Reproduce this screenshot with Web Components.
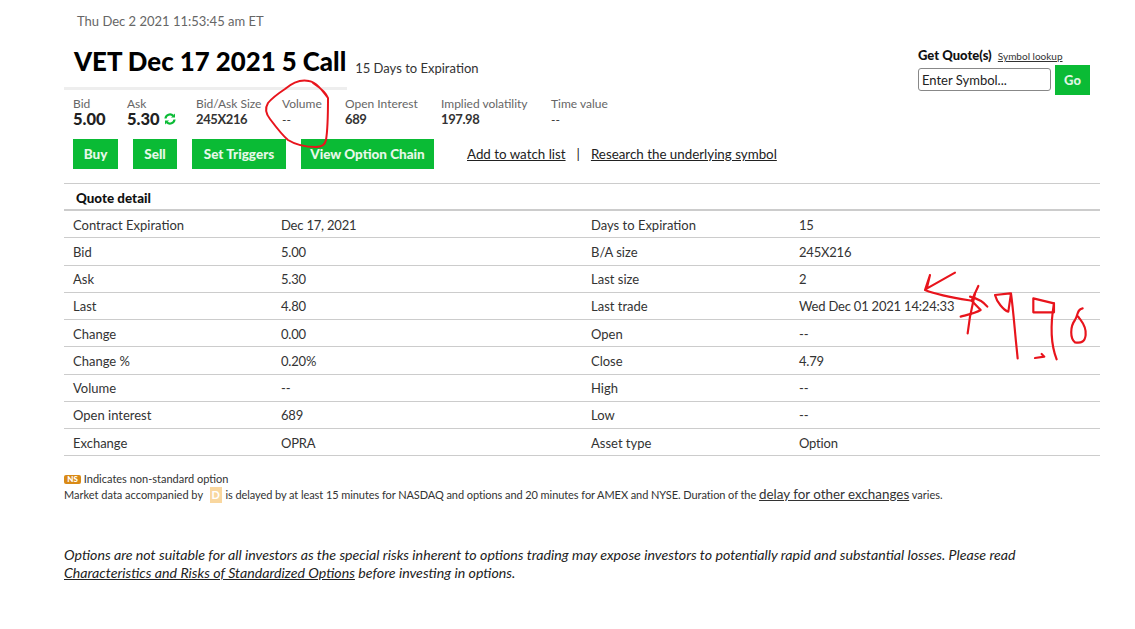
<!DOCTYPE html>
<html>
<head>
<meta charset="utf-8">
<title>VET Dec 17 2021 5 Call</title>
<style>
  html, body { margin: 0; background: #fff; }
  body { font-family: Lato, "Noto Sans", sans-serif; color: #333; }
  quote-actions a { text-decoration: underline; }
  quote-actions i { font-style: normal; margin: 0 11px; }
</style>
</head>
<body>
<quote-page>
  <quote-top></quote-top>
  <quote-stats>
    <stat-item label="Bid" value="5.00" big style="--w:54px"></stat-item>
    <stat-item label="Ask" value="5.30" big refresh style="--w:69px"></stat-item>
    <stat-item label="Bid/Ask Size" value="245X216" style="--w:86px"></stat-item>
    <stat-item label="Volume" value="--" plain style="--w:63px"></stat-item>
    <stat-item label="Open Interest" value="689" style="--w:96px"></stat-item>
    <stat-item label="Implied volatility" value="197.98" style="--w:110px"></stat-item>
    <stat-item label="Time value" value="--" plain style="--w:90px"></stat-item>
  </quote-stats>
  <quote-actions>
    <green-btn style="--w:45px">Buy</green-btn>
    <green-btn style="--w:44px">Sell</green-btn>
    <green-btn style="--w:94px">Set Triggers</green-btn>
    <green-btn style="--w:133px">View Option Chain</green-btn>
    <span slot="links"><a>Add to watch list</a><i>|</i><a>Research the underlying symbol</a></span>
  </quote-actions>
  <quote-table>
    <quote-row a="Contract Expiration" b="Dec 17, 2021" c="Days to Expiration" d="15"></quote-row>
    <quote-row a="Bid" b="5.00" c="B/A size" d="245X216"></quote-row>
    <quote-row a="Ask" b="5.30" c="Last size" d="2"></quote-row>
    <quote-row a="Last" b="4.80" c="Last trade" d="Wed Dec 01 2021 14:24:33"></quote-row>
    <quote-row a="Change" b="0.00" c="Open" d="--"></quote-row>
    <quote-row a="Change %" b="0.20%" c="Close" d="4.79"></quote-row>
    <quote-row a="Volume" b="--" c="High" d="--"></quote-row>
    <quote-row a="Open interest" b="689" c="Low" d="--"></quote-row>
    <quote-row a="Exchange" b="OPRA" c="Asset type" d="Option"></quote-row>
  </quote-table>
  <quote-notes></quote-notes>
  <red-ink></red-ink>
</quote-page>

<script>
class QuotePage extends HTMLElement {
  constructor() {
    super();
    this.attachShadow({ mode: "open" });
    this.shadowRoot.innerHTML = `
      <style>
        :host {
          display: block;
          position: relative;
          box-sizing: border-box;
          width: 1135px;
          height: 629px;
          padding: 14px 35px 0 64px;
          overflow: hidden;
        }
      </style>
      <slot></slot>
    `;
  }
}

class QuoteTop extends HTMLElement {
  constructor() {
    super();
    this.attachShadow({ mode: "open" });
    this.shadowRoot.innerHTML = `
      <style>
        :host { display: block; height: 75px; }
        .time { font-size: 13px; line-height: 15px; color: #666; padding-left: 13px; }
        .row { display: flex; justify-content: space-between; }
        .left { width: 283px; height: 45px; margin-top: 16px; padding-left: 10px; box-sizing: border-box; white-space: nowrap; border-bottom: 3px solid #eee; }
        h1 { display: inline; margin: 0; font-size: 25.8px; line-height: 32px; font-weight: 900; color: #000; }
        .days { font-size: 13px; color: #333; margin-left: 9px; position: relative; top: 2px; }
        .get { width: 172px; margin: 15px 10px 0 0; }
        .get b { font-size: 13px; font-weight: 900; color: #111; }
        .get a { font-size: 10px; color: #333; text-decoration: underline; margin-left: 2px; }
        .form { display: flex; gap: 4px; margin-top: 2px; }
        .input { box-sizing: border-box; width: 133px; height: 23px; margin-top: 3px; border: 1px solid #888; border-radius: 3px; padding-left: 3px; font-size: 13px; line-height: 22px; color: #222; }
        .go { width: 35px; height: 30px; background: #0abb35; color: #dff5e2; font-size: 13px; font-weight: 900; display: flex; align-items: center; justify-content: center; }
      </style>
      <div class="time">Thu Dec 2 2021 11:53:45 am ET</div>
      <div class="row">
        <div class="left"><h1>VET Dec 17 2021 5 Call</h1><span class="days">15 Days to Expiration</span></div>
        <div class="get">
          <b>Get Quote(s)</b> <a>Symbol lookup</a>
          <div class="form"><div class="input">Enter Symbol...</div><div class="go">Go</div></div>
        </div>
      </div>
    `;
  }
}

class QuoteStats extends HTMLElement {
  constructor() {
    super();
    this.attachShadow({ mode: "open" });
    this.shadowRoot.innerHTML = `
      <style>:host { display: flex; padding: 8px 0 0 9px; height: 42px; }</style>
      <slot></slot>
    `;
  }
}

class StatItem extends HTMLElement {
  constructor() {
    super();
    this.attachShadow({ mode: "open" });
  }
  connectedCallback() {
    const big = this.hasAttribute("big");
    const plain = this.hasAttribute("plain");
    const icon = this.hasAttribute("refresh") ? `
      <svg width="12" height="12" viewBox="0 0 12 12" fill="none" stroke="#0abb35" stroke-width="2.2">
        <path d="M1.5 5.5A4.5 4.5 0 0 1 9.2 2.8"/><path d="M10.5 6.5A4.5 4.5 0 0 1 2.8 9.2"/>
        <path d="M11 0.5V4.5H7" fill="#0abb35" stroke="none"/><path d="M1 11.5V7.5H5" fill="#0abb35" stroke="none"/>
      </svg>` : "";
    this.shadowRoot.innerHTML = `
      <style>
        :host { display: block; flex: none; width: var(--w); white-space: nowrap; }
        .l { font-size: 12px; line-height: 14px; color: #666; }
        .v { display: flex; align-items: center; gap: 4px; height: 16px;
             font-size: ${big ? 16.5 : plain ? 12 : 13}px;
             letter-spacing: ${big || plain ? 0 : -0.4}px;
             font-weight: ${plain ? 400 : big ? 900 : 700};
             color: ${big ? "#222" : "#333"}; }
      </style>
      <div class="l">${this.getAttribute("label")}</div>
      <div class="v">${this.getAttribute("value")}${icon}</div>
    `;
  }
}

class GreenBtn extends HTMLElement {
  constructor() {
    super();
    this.attachShadow({ mode: "open" });
    this.shadowRoot.innerHTML = `
      <style>
        :host {
          display: flex;
          flex: none;
          width: var(--w);
          height: 30px;
          align-items: center;
          justify-content: center;
          background: #0abb35;
          color: #e6f8e8;
          font-size: 13.5px;
          font-weight: 900;
          white-space: nowrap;
        }
      </style>
      <slot></slot>
    `;
  }
}

class QuoteActions extends HTMLElement {
  constructor() {
    super();
    this.attachShadow({ mode: "open" });
    this.shadowRoot.innerHTML = `
      <style>
        :host { display: flex; align-items: center; gap: 15px; padding: 0 0 0 9px; height: 30px; }
        .links { margin-left: 18px; font-size: 13.35px; color: #222; white-space: nowrap; }
      </style>
      <slot></slot>
      <div class="links"><slot name="links"></slot></div>
    `;
  }
}

class QuoteTable extends HTMLElement {
  constructor() {
    super();
    this.attachShadow({ mode: "open" });
    this.shadowRoot.innerHTML = `
      <style>
        :host { display: block; margin-top: 14px; border-top: 1px solid #ccc; }
        .head { height: 27px; box-sizing: border-box; border-bottom: 2px solid #ccc; padding: 6px 0 0 12px; font-size: 13.4px; line-height: 16px; font-weight: 900; color: #111; }
      </style>
      <div class="head">Quote detail</div>
      <slot></slot>
    `;
  }
}

class QuoteRow extends HTMLElement {
  constructor() {
    super();
    this.attachShadow({ mode: "open" });
  }
  connectedCallback() {
    const val = k => `<div class="val">${this.getAttribute(k)}</div>`;
    this.shadowRoot.innerHTML = `
      <style>
        :host {
          display: grid;
          grid-template-columns: 208px 310px 208px 1fr;
          box-sizing: border-box;
          height: 27.25px;
          padding: 1px 0 0 9px;
          align-items: center;
          border-bottom: 1px solid #ccc;
          font-size: 13px;
          color: #333;
          white-space: nowrap;
        }
        .val { letter-spacing: -0.2px; }
      </style>
      <div>${this.getAttribute("a")}</div>${val("b")}<div>${this.getAttribute("c")}</div>${val("d")}
    `;
  }
}

class QuoteNotes extends HTMLElement {
  constructor() {
    super();
    this.attachShadow({ mode: "open" });
    this.shadowRoot.innerHTML = `
      <style>
        :host { display: block; margin-top: 15px; font-size: 11px; line-height: 16px; color: #333; white-space: nowrap; }
        .ns { display: inline-block; width: 17px; height: 9px; line-height: 9px; border-radius: 2px; background: #d98a16; color: #fff; font-size: 8px; font-weight: 900; text-align: center; vertical-align: 1px; }
        .d { display: inline-block; width: 12px; height: 16px; line-height: 16px; background: #f9d79f; color: #fff; font-weight: 700; text-align: center; margin: 0 1px 0 4px; }
        .line { margin-top: -1px; }
        .rest { letter-spacing: -0.075px; }
        .big { font-size: 13.4px; letter-spacing: 0; text-decoration: underline; }
        .risk { margin-top: 43px; font-size: 14.2px; line-height: 18px; font-style: italic; color: #222; }
      </style>
      <div><span class="ns">NS</span> Indicates non-standard option</div>
      <div class="line">Market data accompanied by <span class="d">D</span> <span class="rest">is delayed by at least 15 minutes for NASDAQ and options and 20 minutes for AMEX and NYSE. Duration of the</span> <span class="big">delay for other exchanges</span> varies.</div>
      <div class="risk">Options are not suitable for all investors as the special risks inherent to options trading may expose investors to potentially rapid and substantial losses. Please read<br><u>Characteristics and Risks of Standardized Options</u> before investing in options.</div>
    `;
  }
}

// hand drawn red marks on top of the page
class RedInk extends HTMLElement {
  constructor() {
    super();
    this.attachShadow({ mode: "open" });
    this.shadowRoot.innerHTML = `
      <style>:host { position: absolute; left: 0; top: 0; pointer-events: none; }</style>
      <svg width="1135" height="629" viewBox="0 0 1135 629" fill="none" stroke="#e8141c" stroke-width="2" stroke-linecap="round" stroke-linejoin="round" style="display:block">
        <path d="M328 98C322 90 316 82 309 81C300 79 292 83 285 89C279 93 272 98 268 103C265 108 266 114 270 119C276 127 282 135 288 140C296 145 306 147 316 147C322 147 325 145 326 140C328 128 328 114 328 98C326 92 319 87 313 83"/>
        <g transform="translate(900 260) scale(.3333)" stroke-width="6.5">
          <path d="M165 38L80 86L90 45L75 90C120 108 170 115 215 122"/>
          <path d="M235 78L215 122L242 150C225 160 200 165 182 170"/>
          <path d="M210 110C230 115 250 125 262 140"/>
          <path d="M225 100L210 170L203 220"/>
          <path d="M330 100L285 105C290 125 310 150 325 155L333 100C340 150 345 220 350 265L353 295"/>
          <path d="M400 115V157H462V130L400 115"/>
          <path d="M462 130C450 200 455 260 470 298"/>
          <path d="M405 294L433 290L425 282"/>
          <path d="M548 145C530 148 535 165 525 180C510 200 510 235 525 247C545 250 555 245 557 225C560 195 540 180 535 170"/>
        </g>
      </svg>
    `;
  }
}

customElements.define("quote-page", QuotePage);
customElements.define("quote-top", QuoteTop);
customElements.define("quote-stats", QuoteStats);
customElements.define("stat-item", StatItem);
customElements.define("green-btn", GreenBtn);
customElements.define("quote-actions", QuoteActions);
customElements.define("quote-table", QuoteTable);
customElements.define("quote-row", QuoteRow);
customElements.define("quote-notes", QuoteNotes);
customElements.define("red-ink", RedInk);
</script>
</body>
</html>
